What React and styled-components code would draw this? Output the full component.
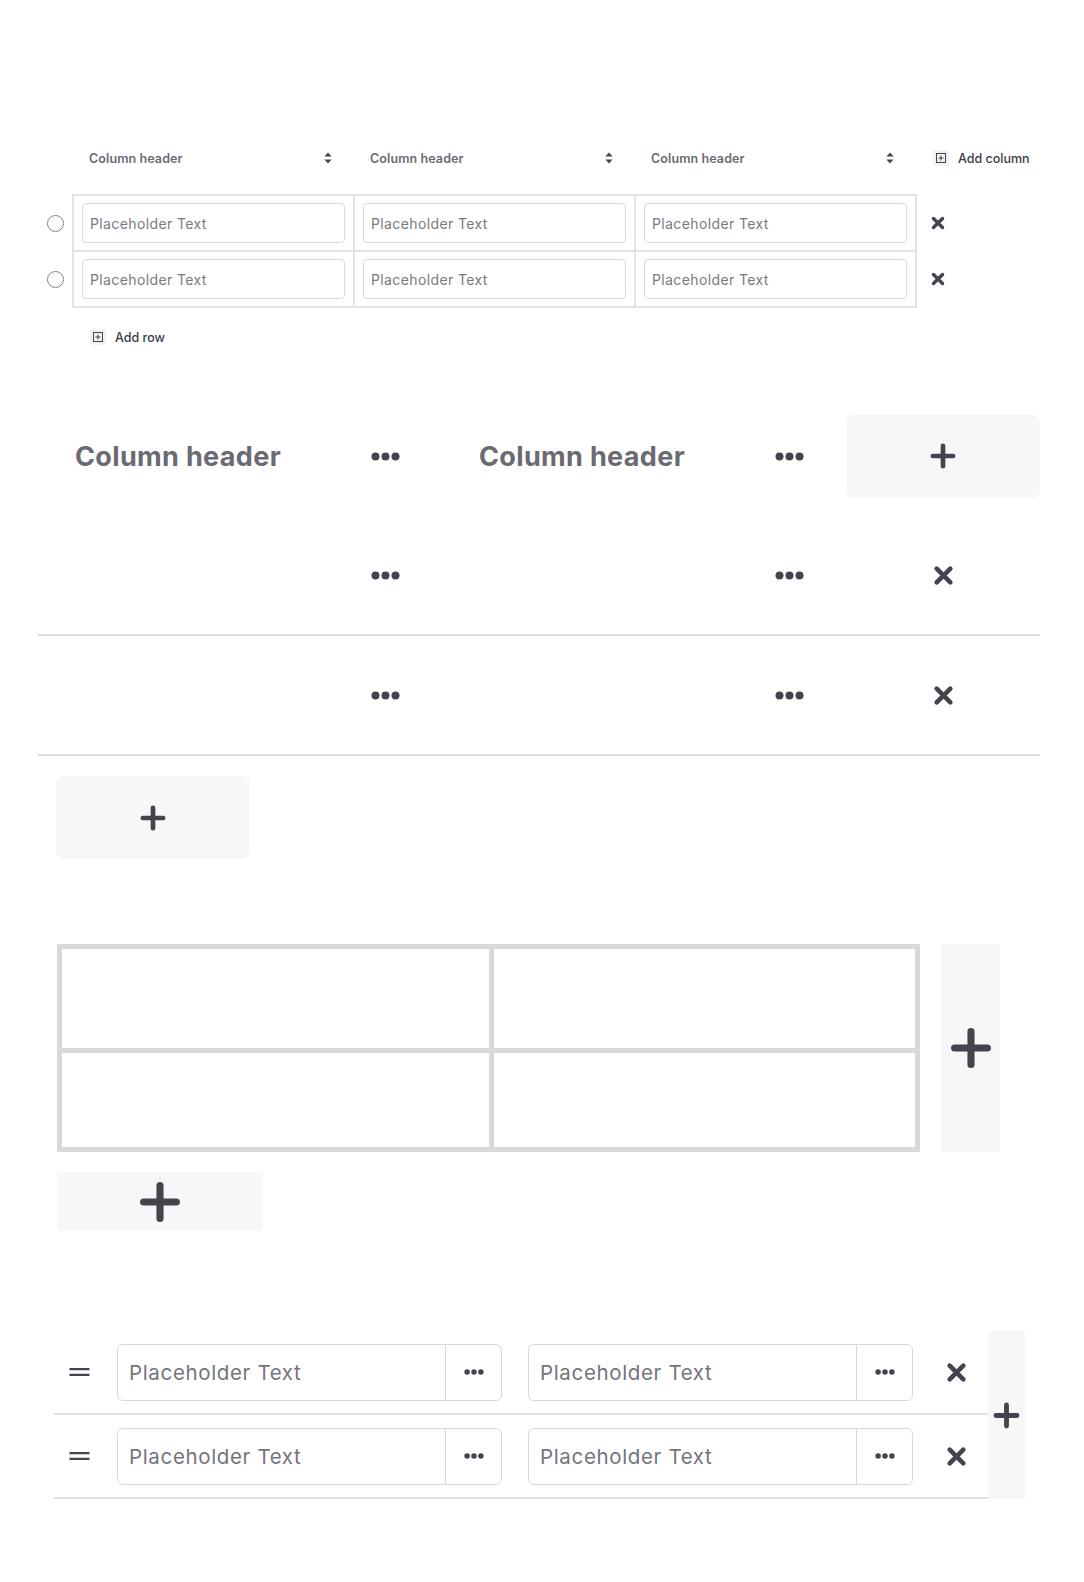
import styled, { createGlobalStyle } from 'styled-components';

const INK = '#46434f';
const MUTED = '#6b6a72';
const LINE = '#dcdcdc';
const SOFT = '#f7f7f7';

const GlobalStyle = createGlobalStyle`
  * { box-sizing: border-box; }
  body {
    margin: 0;
    background: #fff;
    font-family: Inter, "Noto Sans", sans-serif;
    color: ${INK};
  }
`;

// --- icons ---
const Cross = ({ size = 14, stroke = 4.5 }) => (
  <svg width={size} height={size} viewBox="0 0 20 20">
    <path d="M3.5 3.5L16.5 16.5M16.5 3.5L3.5 16.5" stroke={INK} strokeWidth={stroke} strokeLinecap="round" />
  </svg>
);

const Plus = ({ size = 26, stroke = 3.8 }) => (
  <svg width={size} height={size} viewBox="0 0 20 20">
    <path d="M10 2.2V17.8M2.2 10H17.8" stroke={INK} strokeWidth={stroke} strokeLinecap="round" />
  </svg>
);

const Dots = ({ width = 29 }) => (
  <svg width={width} height={(width * 9) / 29} viewBox="0 0 29 9">
    <circle cx="4.5" cy="4.5" r="4" fill={INK} />
    <circle cx="14.5" cy="4.5" r="4" fill={INK} />
    <circle cx="24.5" cy="4.5" r="4" fill={INK} />
  </svg>
);

const Sort = () => (
  <svg width="8" height="12" viewBox="0 0 8 12">
    <path d="M4 0.6L7.6 4.6H0.4Z" fill={INK} />
    <path d="M0.4 7.4H7.6L4 11.4Z" fill={INK} />
  </svg>
);

const Handle = () => (
  <svg width="21" height="10" viewBox="0 0 21 10">
    <path d="M0.5 2.2H20.5M0.5 7.8H20.5" stroke={INK} strokeWidth="2.3" />
  </svg>
);

const BoxPlus = () => (
  <svg width="10" height="10" viewBox="0 0 10 10">
    <rect x="0.5" y="0.5" width="9" height="9" fill="none" stroke={INK} strokeWidth="1" />
    <path d="M5 2.5V7.5M2.5 5H7.5" stroke={INK} strokeWidth="1" />
  </svg>
);

// --- page ---
const Page = styled.main`
  display: flex;
  flex-direction: column;
  padding: 140px 0 80px 38px;
`;

// section 1: editable input table
const HeadRow = styled.div`
  display: flex;
  align-items: center;
  height: 36px;
  padding-left: 34px;
`;

const HeadCell = styled.div`
  width: 281px;
  display: flex;
  align-items: center;
  justify-content: space-between;
  padding: 0 21px 0 17px;
  font-size: 12.5px;
  font-weight: 600;
  letter-spacing: 0.1px;
  color: ${MUTED};
`;

const TextButton = styled.button`
  display: inline-flex;
  align-items: center;
  gap: 9px;
  height: 24px;
  padding: 0;
  border: none;
  background: none;
  font-family: inherit;
  font-size: 12.5px;
  font-weight: 500;
  color: #3c3a44;
  margin-left: ${(p) => p.$indent || 0}px;
  margin-top: ${(p) => p.$top || 0}px;
  align-self: ${(p) => (p.$start ? 'flex-start' : 'center')};
`;

const IconChip = styled.span`
  width: 16px;
  height: 16px;
  border-radius: 3px;
  background: #f2f2f3;
  display: inline-flex;
  align-items: center;
  justify-content: center;
`;

const TableBody = styled.div`
  display: flex;
  margin-top: 18px;
`;

const SideCol = styled.div`
  display: flex;
  flex-direction: column;
  gap: 2px;
  padding-top: 2px;
  width: ${(p) => p.$width}px;
  padding-left: ${(p) => p.$pad || 0}px;
`;

const SideSlot = styled.div`
  height: 54px;
  display: flex;
  align-items: center;
  justify-content: ${(p) => (p.$center ? 'center' : 'flex-start')};
`;

const Radio = styled.span`
  width: 17px;
  height: 17px;
  border-radius: 50%;
  border: 1px solid #7f7e86;
  background: #fff;
`;

const InputGrid = styled.div`
  display: grid;
  grid-template-columns: repeat(3, 279px);
  grid-auto-rows: 54px;
  gap: 2px;
  border: 2px solid #e3e3e3;
  background: #e3e3e3;
`;

const InputCell = styled.div`
  background: #fff;
  padding: 7px 8px;
`;

const SmallInput = styled.input`
  width: 100%;
  height: 40px;
  border: 1px solid #dadada;
  border-radius: 4px;
  padding: 0 7px;
  font-family: inherit;
  font-size: 14px;
  letter-spacing: 0.38px;
  color: ${INK};
  outline: none;
  &::placeholder {
    color: #7a7980;
  }
`;

// section 2: block table
const Board = styled.div`
  width: 1002px;
  margin-top: 47px;
`;

const BoardRow = styled.div`
  display: grid;
  grid-template-columns: 404px 404px 194px;
  align-items: center;
  height: 120px;
  border-bottom: ${(p) => (p.$line ? `2px solid ${LINE}` : 'none')};
`;

const BoardCell = styled.div`
  display: flex;
  align-items: center;
  justify-content: ${(p) => (p.$center ? 'center' : 'space-between')};
  padding: ${(p) => (p.$center ? '0' : '0 42px 0 37px')};
  min-height: 30px;
`;

const BigHeading = styled.h2`
  margin: 0;
  font-size: 27px;
  font-weight: 700;
  letter-spacing: 0.35px;
  color: ${MUTED};
`;

const SoftButton = styled.button`
  display: flex;
  align-items: center;
  justify-content: center;
  width: ${(p) => p.$w}px;
  height: ${(p) => (p.$h ? `${p.$h}px` : 'auto')};
  padding: 0;
  border: none;
  border-radius: ${(p) => p.$radius || 0}px;
  background: ${SOFT};
  margin: ${(p) => p.$margin || '0'};
  justify-self: ${(p) => p.$justify || 'stretch'};
`;

// section 3: canvas grid
const Canvas = styled.div`
  display: grid;
  grid-template-columns: 863px 59px;
  column-gap: 21px;
  row-gap: 20px;
  margin: 85px 0 0 19px;
`;

const BlankGrid = styled.div`
  display: grid;
  grid-template-columns: 427px 421px;
  grid-template-rows: 99px 94px;
  gap: 5px;
  border: 5px solid #d9d9d9;
  background: #d9d9d9;
`;

const BlankCell = styled.div`
  background: #fff;
`;

// section 4: sortable list
const ListWrap = styled.div`
  display: flex;
  margin: 100px 0 0 16px;
`;

const ListRows = styled.div`
  width: 934px;
`;

const ListRow = styled.div`
  display: flex;
  align-items: center;
  height: 84px;
  padding-left: 15px;
  border-bottom: 2px solid #e3e3e3;
`;

const InputGroup = styled.div`
  display: flex;
  width: 385px;
  height: 57px;
  border: 1px solid #d9d9d9;
  border-radius: 6px;
  margin-left: ${(p) => p.$gap}px;
`;

const BigInput = styled.input`
  flex: 1;
  min-width: 0;
  border: none;
  background: none;
  padding: 0 11px;
  font-family: inherit;
  font-size: 20.5px;
  letter-spacing: 0.65px;
  color: ${INK};
  outline: none;
  &::placeholder {
    color: #75747b;
  }
`;

const GroupAction = styled.div`
  width: 56px;
  border-left: 1px solid #d9d9d9;
  display: flex;
  align-items: center;
  justify-content: center;
`;

const RowRemove = styled.div`
  display: flex;
  margin-left: 33px;
`;

const PlusColumn = styled.div`
  width: 37px;
  background: ${SOFT};
  display: flex;
  align-items: center;
  justify-content: center;
`;

const columns = ['Column header', 'Column header', 'Column header'];
const rows = [0, 1];

export default function App() {
  return (
    <>
      <GlobalStyle />
      <Page>
        <HeadRow>
          {columns.map((c, i) => (
            <HeadCell key={i}>
              <span>{c}</span>
              <Sort />
            </HeadCell>
          ))}
          <TextButton $indent={18}>
            <IconChip><BoxPlus /></IconChip>
            Add column
          </TextButton>
        </HeadRow>
        <TableBody>
          <SideCol $width={34}>
            {rows.map((r) => (
              <SideSlot key={r} $center><Radio /></SideSlot>
            ))}
          </SideCol>
          <InputGrid>
            {rows.map((r) =>
              columns.map((_, i) => (
                <InputCell key={`${r}-${i}`}>
                  <SmallInput placeholder="Placeholder Text" />
                </InputCell>
              ))
            )}
          </InputGrid>
          <SideCol $width={40} $pad={14}>
            {rows.map((r) => (
              <SideSlot key={r}><Cross size={14} stroke={4.8} /></SideSlot>
            ))}
          </SideCol>
        </TableBody>
        <TextButton $indent={52} $top={17} $start>
          <IconChip><BoxPlus /></IconChip>
          Add row
        </TextButton>

        <Board>
          <BoardRow>
            <BoardCell><BigHeading>Column header</BigHeading><Dots /></BoardCell>
            <BoardCell><BigHeading>Column header</BigHeading><Dots /></BoardCell>
            <BoardCell $center>
              <SoftButton $w={194} $h={83} $radius={8}><Plus size={26} stroke={3.6} /></SoftButton>
            </BoardCell>
          </BoardRow>
          {rows.map((r) => (
            <BoardRow key={r} $line>
              <BoardCell><span /><Dots /></BoardCell>
              <BoardCell><span /><Dots /></BoardCell>
              <BoardCell $center><Cross size={21} stroke={4.4} /></BoardCell>
            </BoardRow>
          ))}
          <SoftButton $w={194} $h={83} $radius={8} $margin="20px 0 0 18px">
            <Plus size={26} stroke={3.6} />
          </SoftButton>
        </Board>

        <Canvas>
          <BlankGrid>
            <BlankCell /><BlankCell /><BlankCell /><BlankCell />
          </BlankGrid>
          <SoftButton $w={59}><Plus size={42} stroke={3.4} /></SoftButton>
          <SoftButton $w={206} $h={59} $justify="start"><Plus size={42} stroke={3.4} /></SoftButton>
        </Canvas>

        <ListWrap>
          <ListRows>
            {rows.map((r) => (
              <ListRow key={r}>
                <Handle />
                <InputGroup $gap={27}>
                  <BigInput placeholder="Placeholder Text" />
                  <GroupAction><Dots width={20} /></GroupAction>
                </InputGroup>
                <InputGroup $gap={26}>
                  <BigInput placeholder="Placeholder Text" />
                  <GroupAction><Dots width={20} /></GroupAction>
                </InputGroup>
                <RowRemove><Cross size={21} stroke={4.4} /></RowRemove>
              </ListRow>
            ))}
          </ListRows>
          <PlusColumn><Plus size={27} stroke={3.6} /></PlusColumn>
        </ListWrap>
      </Page>
    </>
  );
}
